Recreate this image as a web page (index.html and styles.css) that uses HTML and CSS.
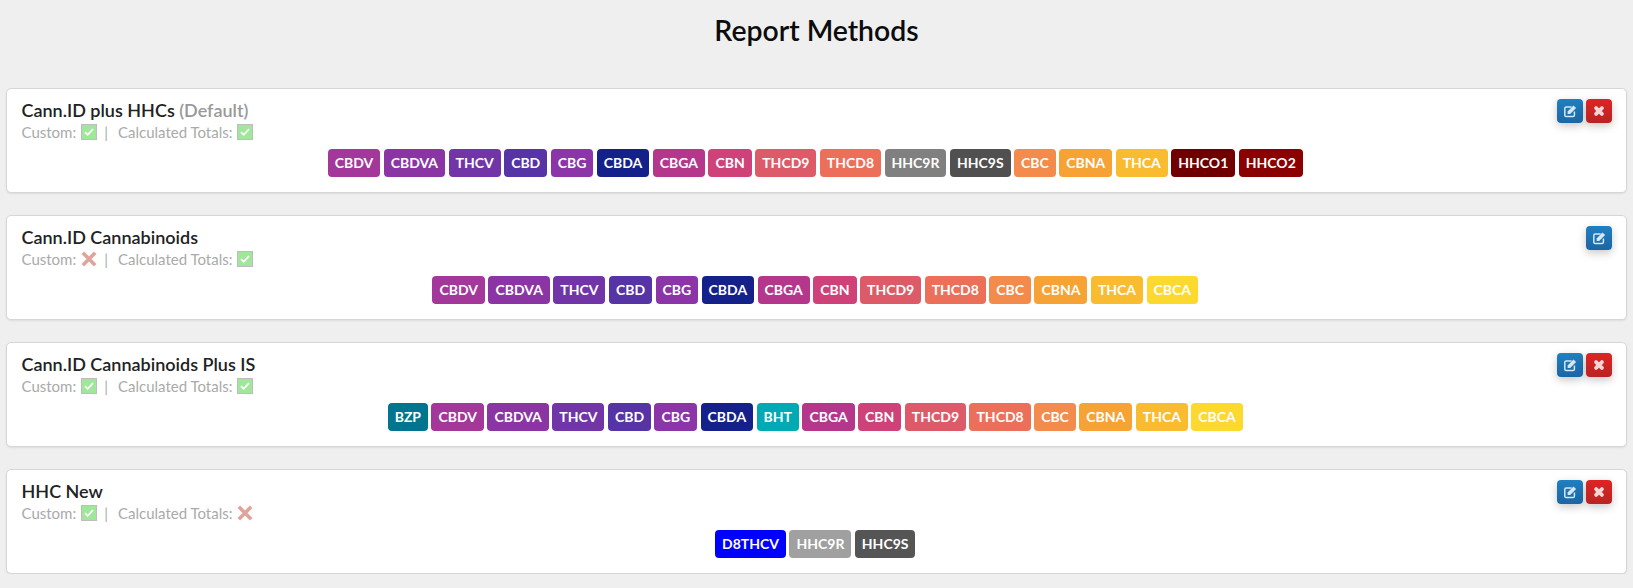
FILE: index.html
```html
<!DOCTYPE html>
<html lang="en">
<head>
<meta charset="utf-8">
<title>Report Methods</title>
<link rel="stylesheet" href="styles.css">
</head>
<body>
<svg class="defs" width="0" height="0" aria-hidden="true">
  <symbol id="yes" viewBox="0 0 16 16"><rect x=".5" y=".5" width="15" height="15" fill="#a0e79c" stroke="#bdbdbd"/><path d="M4 8.200l2.700 2.700L12 5.200" fill="none" stroke="#fff" stroke-width="1.700"/></symbol>
  <symbol id="no" viewBox="0 0 16 16"><path d="M1.800 1.800l12.400 12.400M14.200 1.800L1.800 14.200" fill="none" stroke="#dfa59c" stroke-width="3.600"/></symbol>
  <symbol id="edit" viewBox="0 0 14 14"><path d="M8.600 3H3.200Q1.800 3 1.800 4.400v6.800q0 1.400 1.400 1.400h6.800q1.400 0 1.400-1.400V7.400" fill="none" stroke="#d6e6f3" stroke-width="1.500"/><path d="M4.600 7.400L10.500 1.500l2.600 2.600L7.200 10H4.600z" fill="#d6e6f3"/></symbol>
  <symbol id="del" viewBox="0 0 12 12"><path d="M3.500 3.500l5 5M8.500 3.500l-5 5" stroke="#f6d5d5" stroke-width="3.300" stroke-linecap="round" fill="none"/></symbol>
</svg>
<h1 class="page-title">Report Methods</h1>
<main class="list">

<section class="card">
  <div class="head">
    <div>
      <h2 class="name">Cann.ID plus HHCs <span class="default">(Default)</span></h2>
      <p class="meta"><span>Custom:</span><svg class="mark"><use href="#yes"/></svg><span class="sep">|</span><span>Calculated Totals:</span><svg class="mark"><use href="#yes"/></svg></p>
    </div>
    <div class="actions">
      <button class="btn blue"><svg class="ico"><use href="#edit"/></svg></button>
      <button class="btn red"><svg class="ico"><use href="#del"/></svg></button>
    </div>
  </div>
  <div class="tags">
    <span class="tag c-cbdv">CBDV</span><span class="tag c-cbdva">CBDVA</span><span class="tag c-thcv">THCV</span><span class="tag c-cbd">CBD</span><span class="tag c-cbg">CBG</span><span class="tag c-cbda">CBDA</span><span class="tag c-cbga">CBGA</span><span class="tag c-cbn">CBN</span><span class="tag c-thcd9">THCD9</span><span class="tag c-thcd8">THCD8</span><span class="tag c-hhc9r">HHC9R</span><span class="tag c-hhc9s">HHC9S</span><span class="tag c-cbc">CBC</span><span class="tag c-cbna">CBNA</span><span class="tag c-thca">THCA</span><span class="tag c-hhco1">HHCO1</span><span class="tag c-hhco2">HHCO2</span>
  </div>
</section>

<section class="card">
  <div class="head">
    <div>
      <h2 class="name">Cann.ID Cannabinoids</h2>
      <p class="meta"><span>Custom:</span><svg class="mark"><use href="#no"/></svg><span class="sep">|</span><span>Calculated Totals:</span><svg class="mark"><use href="#yes"/></svg></p>
    </div>
    <div class="actions">
      <button class="btn blue"><svg class="ico"><use href="#edit"/></svg></button>
    </div>
  </div>
  <div class="tags">
    <span class="tag c-cbdv">CBDV</span><span class="tag c-cbdva">CBDVA</span><span class="tag c-thcv">THCV</span><span class="tag c-cbd">CBD</span><span class="tag c-cbg">CBG</span><span class="tag c-cbda">CBDA</span><span class="tag c-cbga">CBGA</span><span class="tag c-cbn">CBN</span><span class="tag c-thcd9">THCD9</span><span class="tag c-thcd8">THCD8</span><span class="tag c-cbc">CBC</span><span class="tag c-cbna">CBNA</span><span class="tag c-thca">THCA</span><span class="tag c-cbca">CBCA</span>
  </div>
</section>

<section class="card">
  <div class="head">
    <div>
      <h2 class="name">Cann.ID Cannabinoids Plus IS</h2>
      <p class="meta"><span>Custom:</span><svg class="mark"><use href="#yes"/></svg><span class="sep">|</span><span>Calculated Totals:</span><svg class="mark"><use href="#yes"/></svg></p>
    </div>
    <div class="actions">
      <button class="btn blue"><svg class="ico"><use href="#edit"/></svg></button>
      <button class="btn red"><svg class="ico"><use href="#del"/></svg></button>
    </div>
  </div>
  <div class="tags">
    <span class="tag c-bzp">BZP</span><span class="tag c-cbdv">CBDV</span><span class="tag c-cbdva">CBDVA</span><span class="tag c-thcv">THCV</span><span class="tag c-cbd">CBD</span><span class="tag c-cbg">CBG</span><span class="tag c-cbda">CBDA</span><span class="tag c-bht">BHT</span><span class="tag c-cbga">CBGA</span><span class="tag c-cbn">CBN</span><span class="tag c-thcd9">THCD9</span><span class="tag c-thcd8">THCD8</span><span class="tag c-cbc">CBC</span><span class="tag c-cbna">CBNA</span><span class="tag c-thca">THCA</span><span class="tag c-cbca">CBCA</span>
  </div>
</section>

<section class="card">
  <div class="head">
    <div>
      <h2 class="name">HHC New</h2>
      <p class="meta"><span>Custom:</span><svg class="mark"><use href="#yes"/></svg><span class="sep">|</span><span>Calculated Totals:</span><svg class="mark"><use href="#no"/></svg></p>
    </div>
    <div class="actions">
      <button class="btn blue"><svg class="ico"><use href="#edit"/></svg></button>
      <button class="btn red"><svg class="ico"><use href="#del"/></svg></button>
    </div>
  </div>
  <div class="tags">
    <span class="tag c-d8thcv">D8THCV</span><span class="tag c-hhc9r-l">HHC9R</span><span class="tag c-hhc9s-l">HHC9S</span>
  </div>
</section>

</main>
</body>
</html>
```
FILE: styles.css
```css
* { box-sizing: border-box; }
html, body { margin: 0; }
body {
  background: #efefef;
  color: #1f1f1f;
  font-family: Lato, "Open Sans", sans-serif;
  overflow: hidden;
}
.defs { position: absolute; }
.page-title {
  margin: 0;
  padding-top: 14px;
  height: 88px;
  text-align: center;
  font-size: 28.4px;
  line-height: 32px;
  font-weight: 600;
  color: #0c0c0c;
}
.list {
  display: flex;
  flex-direction: column;
  gap: 22px;
  padding: 0 6px;
}
.card {
  height: 105px;
  background: #fff;
  border: 1px solid #d6d6d6;
  border-radius: 5px;
  padding: 10px 14px 0 14.5px;
  box-shadow: 0 1px 2px rgba(0,0,0,.08);
}
.head { display: flex; justify-content: space-between; height: 50px; }
.name {
  margin: 0;
  font-size: 18px;
  line-height: 22px;
  font-weight: 600;
  color: #222;
}
.default { color: #999; }
.meta {
  margin: 1px 0 0;
  font-size: 15px;
  line-height: 20px;
  color: #aaa;
  display: flex;
  align-items: center;
  white-space: pre;
}
.mark { width: 16px; height: 16px; margin-left: 5px; }
.sep { margin: 0 10px 0 7px; }
.actions { display: flex; gap: 3px; }
.btn {
  width: 26px;
  height: 24px;
  border: 0;
  padding: 0;
  border-radius: 4px;
  display: flex;
  align-items: center;
  justify-content: center;
  box-shadow: 0 3px 8px rgba(0,0,0,.22);
}
.blue { background: linear-gradient(#2080c0, #1a66a5); }
.red { background: linear-gradient(#de2424, #b92323); }
.ico { width: 14px; height: 14px; }
.tags { display: flex; justify-content: center; gap: 3.44px; margin-right: 3px; }
.tag {
  height: 28px;
  padding: 0 7px;
  border-radius: 4px;
  color: #fff;
  font-size: 14px;
  font-weight: 700;
  line-height: 28px;
  white-space: nowrap;
}
.c-bzp { background: #00758f; }
.c-cbdv { background: #a3379a; }
.c-cbdva { background: #8b35a5; }
.c-thcv { background: #7135a8; }
.c-cbd { background: #5634a5; }
.c-cbg { background: #8b35a8; }
.c-cbda { background: #15218a; }
.c-bht { background: #00aab5; }
.c-cbga { background: #b5378c; }
.c-cbn { background: #cf4279; }
.c-thcd9 { background: #dd5b68; }
.c-thcd8 { background: #ec7059; }
.c-hhc9r { background: #808080; }
.c-hhc9s { background: #505050; }
.c-cbc { background: #f28b4b; }
.c-cbna { background: #f6a235; }
.c-thca { background: #f9bb30; }
.c-cbca { background: #fdd82e; }
.c-hhco1 { background: #700000; }
.c-hhco2 { background: #8b0000; }
.c-d8thcv { background: #0000ff; }
.c-hhc9r-l { background: #a0a0a0; }
.c-hhc9s-l { background: #555555; }
```
